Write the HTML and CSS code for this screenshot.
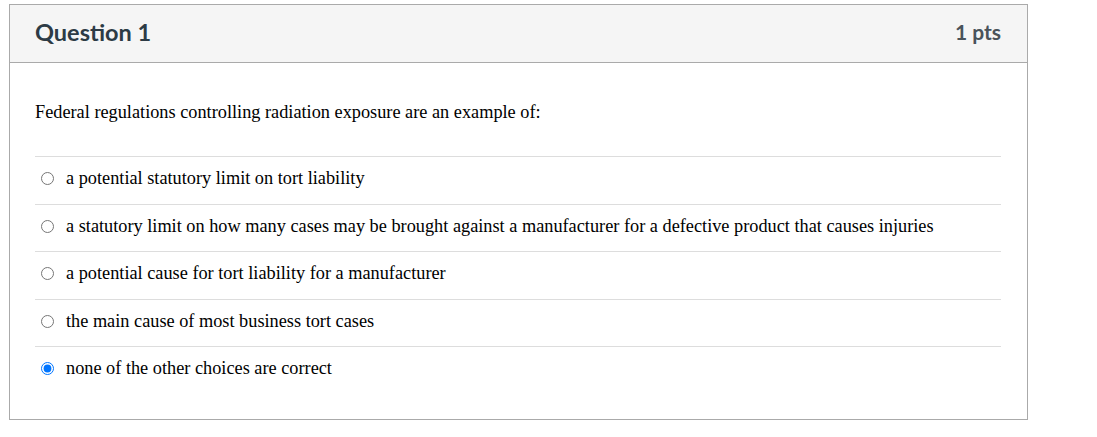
FILE: index.html
```html
<!DOCTYPE html>
<html>
<head>
<meta charset="utf-8">
<link rel="stylesheet" href="styles.css">
</head>
<body>
<div class="question">
  <div class="q-header">
    <h2 class="q-title">Question 1</h2>
    <span class="q-pts">1 pts</span>
  </div>
  <div class="q-body">
    <p class="q-text">Federal regulations controlling radiation exposure are an example of:</p>
    <div class="answers">
      <label class="answer"><input type="radio" name="a"><span>a potential statutory limit on tort liability</span></label>
      <label class="answer"><input type="radio" name="a"><span>a statutory limit on how many cases may be brought against a manufacturer for a defective product that causes injuries</span></label>
      <label class="answer"><input type="radio" name="a"><span>a potential cause for tort liability for a manufacturer</span></label>
      <label class="answer"><input type="radio" name="a"><span>the main cause of most business tort cases</span></label>
      <label class="answer"><input type="radio" name="a" checked><span>none of the other choices are correct</span></label>
    </div>
  </div>
</div>
</body>
</html>
```
FILE: styles.css
```css
body {
  margin: 0;
  background: #fff;
}
.question {
  margin: 4px 0 0 9px;
  width: 1017px;
  border: 1px solid #aaaaaa;
}
.q-header {
  height: 58px;
  box-sizing: border-box;
  background: #f5f5f5;
  border-bottom: 1px solid #aaaaaa;
  display: flex;
  align-items: center;
  justify-content: space-between;
  padding: 0 26px 4px 25px;
  font-family: Lato, "Liberation Sans", sans-serif;
  color: #2d3b45;
}
.q-title {
  margin: 0;
  font-size: 23.5px;
  font-weight: 700;
}
.q-pts {
  font-size: 21px;
  font-weight: 700;
  color: #4a535a;
}
.q-body {
  padding: 37px 26px 25px 25px;
  font-family: "Liberation Serif", "Times New Roman", serif;
  font-size: 18.3px;
  color: #000;
}
.q-text {
  margin: 0 0 32px;
  line-height: 24px;
}
.answers {
  display: flex;
  flex-direction: column;
}
.answer {
  display: flex;
  align-items: center;
  gap: 12px;
  height: 46.5px;
  box-sizing: content-box;
  border-top: 1px solid #dddddd;
  padding: 0 0 0 6px;
  line-height: 20px;
}
.answer input {
  margin: 0 0 3px;
  width: 13px;
  height: 13px;
}
.answer span {
  margin-bottom: 4px;
}
```
